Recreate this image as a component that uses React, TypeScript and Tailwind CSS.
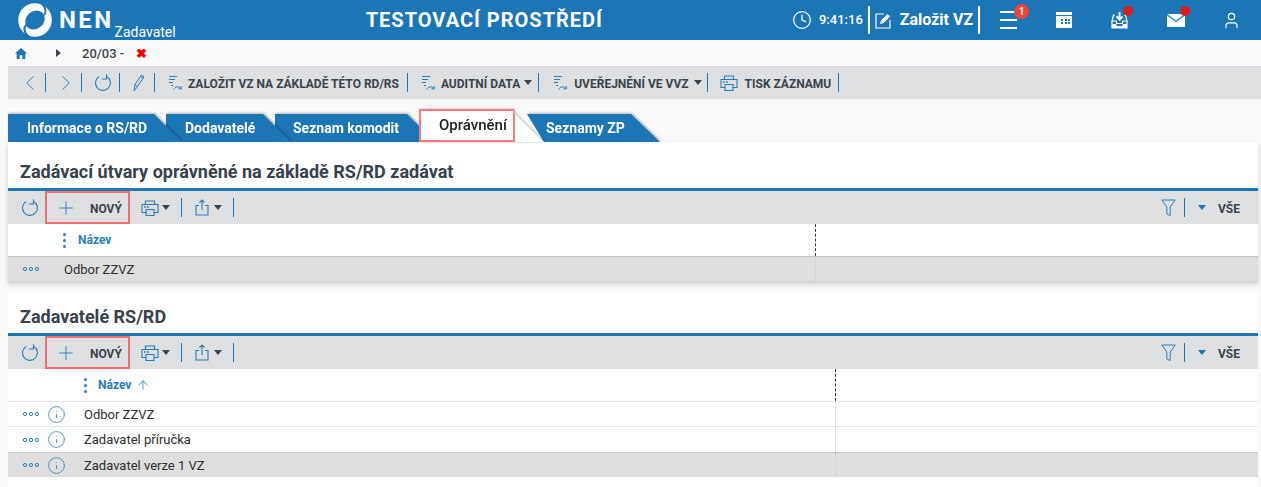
import { ArrowUp, ChevronLeft, ChevronRight, Clock, Info, Plus, User } from "lucide-react";
import type { ReactNode } from "react";

const Sep = () => <span className="block w-px h-[19px] bg-[#1c75b5] shrink-0" />;

const Caret = ({ className = "border-t-[#3a444c]" }: { className?: string }) => (
	<span className={`w-0 h-0 border-x-[4px] border-x-transparent border-t-[5px] shrink-0 ${className}`} />
);

const Refresh = () => (
	<svg width="18" height="18" viewBox="0 0 18 18" fill="none" stroke="#2a7dba" strokeWidth="1.1" className="shrink-0">
		<path d="M5.2 2.4A7.5 7.5 0 1 0 13.2 2.7" />
		<path d="M12.5 0.3V5H7.8" />
	</svg>
);

const ListArrow = () => (
	<svg width="15" height="17" viewBox="0 0 15 17" fill="none" stroke="#2a7dba" strokeWidth="1" className="shrink-0">
		<path d="M1 2.5H9M1 5.5H7M1 8.5H5" />
		<path d="M3 11.5H5" />
		<path d="M6 15.5C6.5 12.5 11 11.8 13 14.5M13.3 12V14.8H10.6" />
	</svg>
);

const Printer = () => (
	<svg width="18" height="16" viewBox="0 0 18 16" fill="none" stroke="#2a7dba" strokeWidth="1.1" className="shrink-0">
		<path d="M4.5 4.5V1H13.5V4.5" />
		<path d="M5 12.5H1V4.5H17V12.5H13" />
		<path d="M5 9.5H13V15.5H5Z" />
		<path d="M3 7H4.8M6 7H7.8" strokeWidth="1.6" />
	</svg>
);

const Share = () => (
	<svg width="14" height="17" viewBox="0 0 14 17" fill="none" stroke="#2a7dba" strokeWidth="1.1" className="shrink-0">
		<path d="M4 6.5H1V16H13V6.5H10" />
		<path d="M7 11V1M4.5 3.5L7 1L9.5 3.5" />
	</svg>
);

const Funnel = () => (
	<svg width="15" height="18" viewBox="0 0 15 18" fill="none" stroke="#2a7dba" strokeWidth="1" className="shrink-0">
		<path d="M0.8 1H14.2L9.2 8V16.5L5.8 15V8Z" />
	</svg>
);

const Dots = () => (
	<svg width="18" height="6" viewBox="0 0 18 6" fill="none" stroke="#2a7dba" className="shrink-0">
		<circle cx="3" cy="3" r="1.6" />
		<circle cx="9" cy="3" r="1.6" />
		<circle cx="15" cy="3" r="1.6" />
	</svg>
);

const VDots = () => (
	<span className="flex flex-col gap-[3px] shrink-0">
		<span className="w-[3px] h-[3px] rounded-full bg-[#2a7dba]" />
		<span className="w-[3px] h-[3px] rounded-full bg-[#2a7dba]" />
		<span className="w-[3px] h-[3px] rounded-full bg-[#2a7dba]" />
	</span>
);

const Logo = () => (
	<svg width="36" height="36" viewBox="0 0 36 36" className="shrink-0">
		<circle cx="18" cy="18" r="16.8" fill="#fff" />
		<ellipse cx="18" cy="18" rx="10.5" ry="8.8" transform="rotate(-40 18 18)" fill="#1c75b5" />
		<path d="M24 1C30 6 29 11 27 13" stroke="#1c75b5" strokeWidth="2" fill="none" />
		<path d="M12 35C6 30 7 25 9 23" stroke="#1c75b5" strokeWidth="2" fill="none" />
	</svg>
);

const Header = () => (
	<header className="h-10 bg-[#1c75b5] flex items-center text-white shrink-0">
		<div className="ml-[17px]"><Logo /></div>
		<span className="ml-[6px] text-[24px] font-bold tracking-[2.4px] leading-none">NEN</span>
		<span className="ml-[1px] mt-[24px] text-[14px] leading-none">Zadavatel</span>
		<span className="ml-[190px] text-[20px] font-bold tracking-[1px] leading-none whitespace-nowrap">TESTOVACÍ PROSTŘEDÍ</span>
		<Clock size={20} strokeWidth={1.5} className="ml-[189px] shrink-0" />
		<span className="ml-[7px] text-[13px] font-medium">9:41:16</span>
		<span className="ml-[5px] w-[2px] h-[28px] bg-white" />
		<svg width="17" height="17" viewBox="0 0 17 17" fill="none" stroke="#fff" strokeWidth="1.2" className="ml-[5px] shrink-0">
			<path d="M9 2H1V16H15V8" />
			<path d="M5 12L6 8.5L12.5 2L15 4.5L8.5 11Z" fill="#fff" stroke="none" />
		</svg>
		<span className="ml-[8px] text-[16px] font-bold whitespace-nowrap">Založit VZ</span>
		<span className="ml-[5px] w-[2px] h-[28px] bg-white" />
		<div className="relative ml-[20px] flex flex-col gap-[6px]">
			<span className="w-[17px] h-[2px] bg-white" />
			<span className="w-[17px] h-[2px] bg-white" />
			<span className="w-[17px] h-[2px] bg-white" />
			<span className="absolute -top-[7px] left-[14px] w-[15px] h-[15px] rounded-full bg-[#f44336] text-[10px] font-bold leading-[15px] text-center">1</span>
		</div>
		<svg width="16" height="16" viewBox="0 0 16 16" fill="#fff" className="ml-[39px] shrink-0">
			<path d="M0 0H16V3H0Z" />
			<path fillRule="evenodd" d="M0 4H16V16H0ZM5 7V9H7V7ZM9 7V9H11V7ZM12 7V9H14V7ZM5 10V12H7V10ZM9 10V12H11V10ZM12 10V12H14V10Z" />
		</svg>
		<div className="relative ml-[39px]">
			<svg width="17" height="17" viewBox="0 0 17 17" fill="none" stroke="#fff" strokeWidth="1.2" className="block">
				<path d="M8.5 0V7M5.5 4.5L8.5 7.5L11.5 4.5" strokeWidth="2" />
				<path d="M4 3H2.5L1 9V16H16V9L14.5 3H13" />
				<path d="M1 9H5.5V11.5H11.5V9H16" />
				<path d="M1 12H5L6 14H11L12 12H16V16H1Z" fill="#fff" stroke="none" />
			</svg>
			<span className="absolute -top-[6px] left-[12px] w-[10px] h-[10px] rounded-full bg-[#dd1b1b]" />
		</div>
		<div className="relative ml-[39px]">
			<svg width="18" height="13" viewBox="0 0 18 13" fill="#fff" className="block">
				<path d="M0 0H18L9 6.5Z" />
				<path d="M0 1.5L9 8L18 1.5V13H0Z" />
			</svg>
			<span className="absolute -top-[8px] left-[13px] w-[10px] h-[10px] rounded-full bg-[#dd1b1b]" />
		</div>
		<User size={19} strokeWidth={1.5} className="ml-[37px] shrink-0" />
	</header>
);

const Breadcrumb = () => (
	<div className="h-[26px] flex items-center shrink-0">
		<svg width="12" height="11" viewBox="0 0 12 11" fill="#1c75b5" className="ml-[15px]">
			<path d="M6 0L12 5.5H10.3V11H7.3V7.3H4.7V11H1.7V5.5H0Z" />
		</svg>
		<span className="ml-[29px] w-0 h-0 border-y-[4px] border-y-transparent border-l-[5px] border-l-[#3a444c]" />
		<span className="ml-[21px] text-[13px] font-medium text-[#3a444c] leading-none">20/03 -</span>
		<span className="ml-[12px] text-[13px] font-black text-[#f00000] leading-none">✖</span>
	</div>
);

const ToolText = ({ children }: { children: ReactNode }) => (
	<span className="text-[12px] font-bold text-[#3a444c] whitespace-nowrap leading-none">{children}</span>
);

const TopToolbar = () => (
	<div className="ml-2 h-[33px] bg-[#dedfe1] flex items-center shrink-0">
		<ChevronLeft size={26} strokeWidth={0.9} color="#2a7dba" className="ml-[9px] shrink-0" />
		<span className="ml-[2px]"><Sep /></span>
		<ChevronRight size={26} strokeWidth={0.9} color="#2a7dba" className="ml-[7px] shrink-0" />
		<span className="ml-[2px]"><Sep /></span>
		<span className="ml-[12px]"><Refresh /></span>
		<span className="ml-[7px]"><Sep /></span>
		<svg width="12" height="18" viewBox="0 0 12 18" fill="none" stroke="#2a7dba" strokeWidth="1" className="ml-[13px] shrink-0">
			<path d="M1 17L2 10.5L8.5 1L11 2.8L4.5 12.5Z" />
			<path d="M2 10.5L4.5 12.5M7.5 2.5L10 4.3" />
		</svg>
		<span className="ml-[9px]"><Sep /></span>
		<span className="ml-[13px] flex"><ListArrow /></span>
		<span className="ml-[5px]"><ToolText>ZALOŽIT VZ NA ZÁKLADĚ TÉTO RD/RS</ToolText></span>
		<span className="ml-[8px]"><Sep /></span>
		<span className="ml-[13px] flex"><ListArrow /></span>
		<span className="ml-[5px]"><ToolText>AUDITNÍ DATA</ToolText></span>
		<span className="ml-[4px] flex"><Caret /></span>
		<span className="ml-[6px]"><Sep /></span>
		<span className="ml-[14px] flex"><ListArrow /></span>
		<span className="ml-[6px]"><ToolText>UVEŘEJNĚNÍ VE VVZ</ToolText></span>
		<span className="ml-[5px] flex"><Caret /></span>
		<span className="ml-[5px]"><Sep /></span>
		<span className="ml-[12px] flex"><Printer /></span>
		<span className="ml-[7px]"><ToolText>TISK ZÁZNAMU</ToolText></span>
		<span className="ml-[7px]"><Sep /></span>
	</div>
);

const Tabs = () => (
	<div className="mt-[14px] ml-2 h-[29px] flex items-end shrink-0 relative z-10">
		<div className="relative z-50 -mr-[16px] [filter:drop-shadow(1px_-1px_1px_rgba(0,0,0,0.28))]">
			<div className="w-[174px] h-[28px] bg-[#1c75b5] pl-[19px] flex items-center text-[14px] font-bold text-white [clip-path:polygon(0_0,146px_0,174px_100%,0_100%)]">
				Informace o RS/RD
			</div>
		</div>
		<div className="relative z-40 -mr-[16px] [filter:drop-shadow(1px_-1px_1px_rgba(0,0,0,0.28))]">
			<div className="w-[125px] h-[28px] bg-[#1c75b5] pl-[19px] flex items-center text-[14px] font-bold text-white [clip-path:polygon(0_0,97px_0,125px_100%,0_100%)]">
				Dodavatelé
			</div>
		</div>
		<div className="relative z-30 -mr-[16px] [filter:drop-shadow(1px_-1px_1px_rgba(0,0,0,0.28))]">
			<div className="w-[160px] h-[28px] bg-[#1c75b5] pl-[18px] flex items-center text-[14px] font-bold text-white [clip-path:polygon(0_0,132px_0,160px_100%,0_100%)]">
				Seznam komodit
			</div>
		</div>
		<div className="relative z-40 -mr-[17px] [filter:drop-shadow(1px_0_1px_rgba(0,0,0,0.3))]">
			<div className="w-[125px] h-[33px] bg-white [clip-path:polygon(0_0,95px_0,95px_4px,125px_100%,0_100%)]">
				<div className="w-[96px] h-[33px] border-2 border-[#f9797f] pl-[18px] flex items-center text-[15px] font-medium text-[#222]">
					Oprávnění
				</div>
			</div>
		</div>
		<div className="relative z-20 [filter:drop-shadow(1px_-1px_1px_rgba(0,0,0,0.28))]">
			<div className="w-[133px] h-[28px] bg-[#1c75b5] pl-[19px] flex items-center text-[14px] font-bold text-white [clip-path:polygon(0_0,104px_0,133px_100%,17px_100%)]">
				Seznamy ZP
			</div>
		</div>
	</div>
);

const PanelToolbar = () => (
	<div className="h-[33px] bg-[#dedfe1] flex items-center">
		<span className="ml-[13px] flex"><Refresh /></span>
		<div className="ml-[6px] w-[85px] h-[33px] border-2 border-[#f56b6f] flex items-center">
			<Plus size={22} strokeWidth={1} color="#2a7dba" className="ml-[8px] shrink-0" />
			<span className="ml-[13px]"><ToolText>NOVÝ</ToolText></span>
		</div>
		<span className="ml-[11px] flex"><Printer /></span>
		<span className="ml-[3px] flex"><Caret /></span>
		<span className="ml-[11px]"><Sep /></span>
		<span className="ml-[13px] flex"><Share /></span>
		<span className="ml-[5px] flex"><Caret /></span>
		<span className="ml-[11px]"><Sep /></span>
		<span className="ml-auto flex"><Funnel /></span>
		<span className="ml-[8px]"><Sep /></span>
		<span className="ml-[13px] flex"><Caret className="border-t-[#1c75b5]" /></span>
		<span className="ml-[12px] mr-[18px]"><ToolText>VŠE</ToolText></span>
	</div>
);

const Row = ({ label, columnClass, info, selected, line }: { label: string; columnClass: string; info?: boolean; selected?: boolean; line?: boolean }) => (
	<div className={`flex h-[25px] ${selected ? "bg-[#dedede] border-t border-[#c6c6c6]" : ""} ${line ? "border-b border-[#e4e4e4]" : ""}`}>
		<div className={`${columnClass} flex items-center pl-[14px] border-r border-dotted border-[#c6c6c6]`}>
			<Dots />
			{info && <Info size={19} strokeWidth={1} color="#2a7dba" className="ml-[7px] shrink-0" />}
			<span className={`${info ? "ml-[18px]" : "ml-[24px]"} text-[13px] text-[#2e2e2e] leading-none`}>{label}</span>
		</div>
	</div>
);

const HeaderRow = ({ columnClass, indentClass, sorted }: { columnClass: string; indentClass: string; sorted?: boolean }) => (
	<div className="flex h-[32px]">
		<div className={`${columnClass} flex items-center border-r border-dashed border-[#1d3c52]`}>
			<span className={`${indentClass} flex`}><VDots /></span>
			<span className={`${sorted ? "ml-[11px]" : "ml-[12px]"} text-[12px] font-bold text-[#2a7dba] leading-none`}>Název</span>
			{sorted && <ArrowUp size={14} strokeWidth={1.75} color="#5ba3d6" className="ml-[5px] shrink-0" />}
		</div>
	</div>
);

export default function App() {
	return (
		<div className="w-[1261px] h-[487px] overflow-hidden flex flex-col bg-[#f9f9f9] font-['Roboto',sans-serif]">
			<Header />
			<Breadcrumb />
			<TopToolbar />
			<Tabs />
			<section className="ml-2 w-[1250px] bg-white shadow-[0_3px_5px_rgba(0,0,0,0.18)] shrink-0">
				<div className="h-[49px] pl-3 pt-[18px] border-b-[3px] border-[#1c75b5]">
					<h2 className="text-[18px] font-bold text-[#37424a] leading-6">Zadávací útvary oprávněné na základě RS/RD zadávat</h2>
				</div>
				<PanelToolbar />
				<HeaderRow columnClass="w-[808px]" indentClass="ml-[55px]" />
				<Row label="Odbor ZZVZ" columnClass="w-[808px]" selected />
			</section>
			<section className="mt-[11px] ml-2 w-[1250px] bg-white flex-1">
				<div className="h-[44px] pl-3 pt-[13px] border-b-[3px] border-[#1c75b5]">
					<h2 className="text-[18px] font-bold text-[#37424a] leading-6">Zadavatelé RS/RD</h2>
				</div>
				<PanelToolbar />
				<div className="border-b border-[#e4e4e4]">
					<HeaderRow columnClass="w-[828px]" indentClass="ml-[76px]" sorted />
				</div>
				<Row label="Odbor ZZVZ" columnClass="w-[828px]" info line />
				<Row label="Zadavatel příručka" columnClass="w-[828px]" info />
				<Row label="Zadavatel verze 1 VZ" columnClass="w-[828px]" info selected />
			</section>
		</div>
	);
}
